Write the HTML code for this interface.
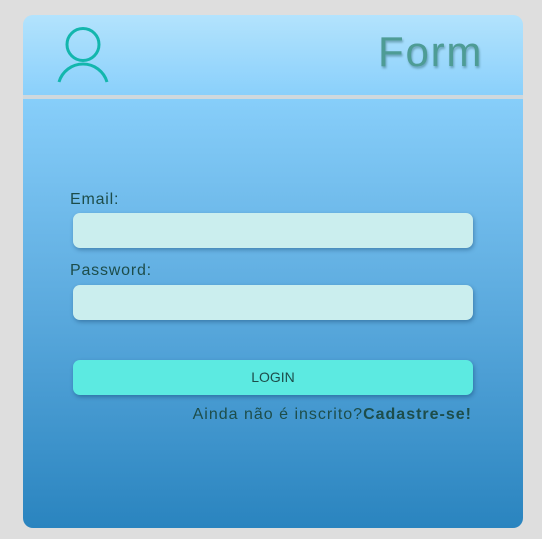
<!DOCTYPE html>
<html><head><style>
body{margin:0;width:542px;height:539px;background:#dedede;font-family:"Liberation Sans",sans-serif;position:relative;overflow:hidden}
.card{position:absolute;left:23px;top:15px;width:500px;height:513px;border-radius:10px;overflow:hidden;background:#cfd8dd}
.hd{position:absolute;left:0;top:0;width:500px;height:80px;background:linear-gradient(#b3e3fd,#8ad0fb)}
.bd{position:absolute;left:0;top:84px;width:500px;height:429px;background:linear-gradient(#87cefa,#5aa9dd 50%,#2a84bf)}
.title{position:absolute;left:355px;top:13px;font-size:42px;color:#4e9c95;text-shadow:1px 2px 2px rgba(0,60,60,.35);letter-spacing:1.8px}
.lbl{position:absolute;left:47px;font-size:16px;color:#1d4d4a;letter-spacing:0.8px}
.in{position:absolute;left:50px;width:400px;height:35px;background:#cbeeee;border-radius:7px;box-shadow:1px 2px 4px rgba(0,40,80,.35)}
.btn{position:absolute;left:50px;top:345px;width:400px;height:35px;background:#5ceae1;border-radius:7px;box-shadow:1px 2px 4px rgba(0,40,80,.35);text-align:center;line-height:35px;font-size:14px;color:#1d4d4a}
.lk{position:absolute;right:51px;top:391px;font-size:16px;color:#1d4d4a;letter-spacing:1px}
</style></head><body>
<div class="card">
<div class="hd">
<svg style="position:absolute;left:0;top:0" width="120" height="80"><g fill="none" stroke="#13b6ad" stroke-width="3"><circle cx="60" cy="29.5" r="16"/><path d="M36 67 A25 25 0 0 1 84 67"/></g></svg>
<div class="title">Form</div>
</div>
<div class="bd"></div>
<div class="lbl" style="top:176px">Email:</div>
<div class="in" style="top:198px"></div>
<div class="lbl" style="top:247px">Password:</div>
<div class="in" style="top:270px"></div>
<div class="btn">LOGIN</div>
<div class="lk">Ainda não é inscrito?<b style="font-weight:600">Cadastre-se!</b></div>
</div>
</body></html>
